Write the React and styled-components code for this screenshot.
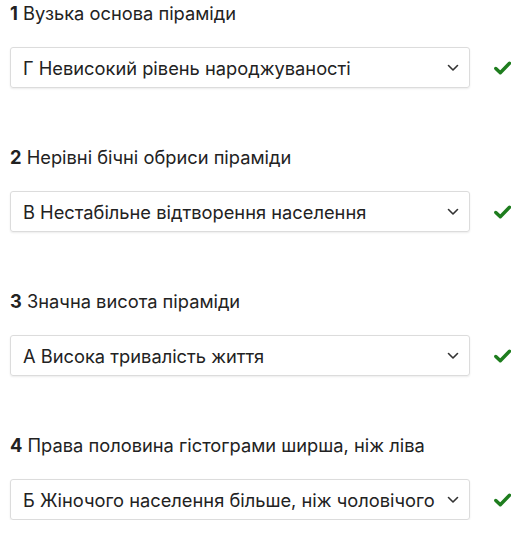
import React from "react";
import styled, { createGlobalStyle } from "styled-components";

const Global = createGlobalStyle`
  html, body { margin: 0; padding: 0; background: #fff; }
  body { font-family: Inter, "Noto Sans", sans-serif; color: #222; }
`;

const Page = styled.div`
  padding: 0 0 0 10px;
  display: flex;
  flex-direction: column;
  gap: 56px;
`;

const Question = styled.div`
  display: flex;
  flex-direction: column;
  gap: 21px;
`;

const Heading = styled.div`
  font-size: 18.3px;
  line-height: 26px;
  color: #222;
  b { font-weight: 700; }
`;

const Row = styled.div`
  display: flex;
  align-items: center;
  gap: 24px;
`;

const Select = styled.div`
  box-sizing: border-box;
  width: 460px;
  height: 41px;
  border: 1px solid #dcdcdc;
  border-radius: 3px;
  box-shadow: 0 1px 2px rgba(0,0,0,0.08);
  display: flex;
  align-items: center;
  justify-content: space-between;
  padding: 0 10px 0 12px;
  font-size: 18.3px;
  color: #222;
  white-space: nowrap;
`;

const Chevron = () => (
  <svg width="12" height="8" viewBox="0 0 12 8">
    <path d="M1.5 1.5 L6 6 L10.5 1.5" fill="none" stroke="#333" strokeWidth="1.6" strokeLinecap="round" strokeLinejoin="round" />
  </svg>
);

const Check = () => (
  <svg width="17" height="14" viewBox="0 0 17 14">
    <path d="M1.8 7.5 L6.3 11.8 L15.5 2.2" fill="none" stroke="#1e7d1e" strokeWidth="3.4" strokeLinecap="round" strokeLinejoin="round" />
  </svg>
);

const data = [
  ["1", "Вузька основа піраміди", "Г Невисокий рівень народжуваності"],
  ["2", "Нерівні бічні обриси піраміди", "В Нестабільне відтворення населення"],
  ["3", "Значна висота піраміди", "А Висока тривалість життя"],
  ["4", "Права половина гістограми ширша, ніж ліва", "Б Жіночого населення більше, ніж чоловічого"],
];

export default function App() {
  return (
    <>
      <Global />
      <Page>
        {data.map(([n, q, a]) => (
          <Question key={n}>
            <Heading><b>{n}</b> {q}</Heading>
            <Row>
              <Select>
                <span>{a}</span>
                <Chevron />
              </Select>
              <Check />
            </Row>
          </Question>
        ))}
      </Page>
    </>
  );
}
